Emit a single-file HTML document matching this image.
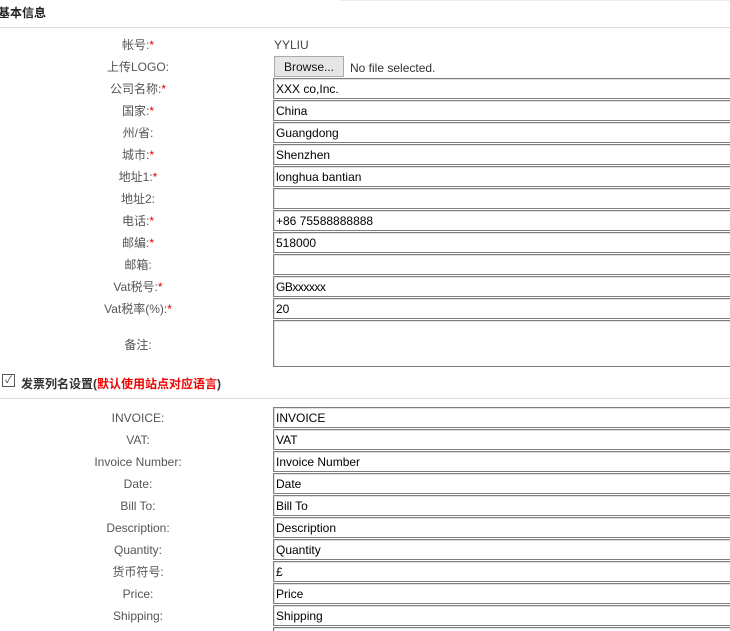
<!DOCTYPE html>
<html><head><meta charset="utf-8"><style>
html,body{margin:0;width:730px;height:631px;overflow:hidden}
body{background:#fff;font-family:"Liberation Sans","Noto Sans CJK SC",Arial,sans-serif;position:relative}
.l{position:absolute;left:0;width:276px;text-align:center;font-size:12px;color:#555;line-height:14px;margin-top:1px}
.r{color:#d00}
.i{position:absolute;left:273px;width:470px;height:19px;border:1px solid #7f7f7f;border-right:none;box-shadow:inset 1px 1px 0 #e0e0e0;font-size:12px;line-height:21px;padding-left:2px;color:#000;box-sizing:content-box}
.hr{position:absolute;left:0;width:730px;height:1px;background:#ddd}
</style></head><body>
<div class="hr" style="top:0;left:340px;width:390px;background:#eee"></div>
<div style="position:absolute;left:-2px;top:4px;font-size:12px;font-weight:bold;color:#222">基本信息</div>
<div class="hr" style="top:27px"></div>

<div class="l" style="top:37px">帐号:<span class="r">*</span></div>
<div style="position:absolute;left:274px;top:38px;font-size:12px;color:#444">YYLIU</div>
<div class="l" style="top:59px">上传LOGO:</div>
<div style="position:absolute;left:274px;top:56px;width:68px;height:19px;border:1px solid #aaa;background:#e6e6e6;font-size:12px;line-height:21px;text-align:center;color:#111">Browse...</div>
<div style="position:absolute;left:350px;top:61px;font-size:12px;color:#333">No file selected.</div>

<div class="l" style="top:81px">公司名称:<span class="r">*</span></div><div class="i" style="top:78px">XXX co,Inc.</div>
<div class="l" style="top:103px">国家:<span class="r">*</span></div><div class="i" style="top:100px">China</div>
<div class="l" style="top:125px">州/省:</div><div class="i" style="top:122px">Guangdong</div>
<div class="l" style="top:147px">城市:<span class="r">*</span></div><div class="i" style="top:144px">Shenzhen</div>
<div class="l" style="top:169px">地址1:<span class="r">*</span></div><div class="i" style="top:166px">longhua bantian</div>
<div class="l" style="top:191px">地址2:</div><div class="i" style="top:188px"></div>
<div class="l" style="top:213px">电话:<span class="r">*</span></div><div class="i" style="top:210px">+86 75588888888</div>
<div class="l" style="top:235px">邮编:<span class="r">*</span></div><div class="i" style="top:232px">518000</div>
<div class="l" style="top:257px">邮箱:</div><div class="i" style="top:254px"></div>
<div class="l" style="top:279px">Vat税号:<span class="r">*</span></div><div class="i" style="top:276px;letter-spacing:-0.5px">GBxxxxxx</div>
<div class="l" style="top:301px">Vat税率(%):<span class="r">*</span></div><div class="i" style="top:298px">20</div>
<div class="l" style="top:337px">备注:</div><div class="i" style="top:320px;height:45px"></div>

<div style="position:absolute;left:2px;top:374px;width:11px;height:11px;border:1px solid #555;font-size:10px;line-height:11px;text-align:center;color:#333">✓</div>
<div style="position:absolute;left:21px;top:375px;font-size:12px;font-weight:bold;color:#333">发票列名设置(<span style="color:#e00">默认使用站点对应语言</span>)</div>
<div class="hr" style="top:398px"></div>

<div class="l" style="top:410px">INVOICE:</div><div class="i" style="top:407px">INVOICE</div>
<div class="l" style="top:432px">VAT:</div><div class="i" style="top:429px">VAT</div>
<div class="l" style="top:454px">Invoice Number:</div><div class="i" style="top:451px">Invoice Number</div>
<div class="l" style="top:476px">Date:</div><div class="i" style="top:473px">Date</div>
<div class="l" style="top:498px">Bill To:</div><div class="i" style="top:495px">Bill To</div>
<div class="l" style="top:520px">Description:</div><div class="i" style="top:517px">Description</div>
<div class="l" style="top:542px">Quantity:</div><div class="i" style="top:539px">Quantity</div>
<div class="l" style="top:564px">货币符号:</div><div class="i" style="top:561px">£</div>
<div class="l" style="top:586px">Price:</div><div class="i" style="top:583px">Price</div>
<div class="l" style="top:608px">Shipping:</div><div class="i" style="top:605px">Shipping</div>
<div class="i" style="top:627px;height:3px;border-bottom:none"></div>
</body></html>
